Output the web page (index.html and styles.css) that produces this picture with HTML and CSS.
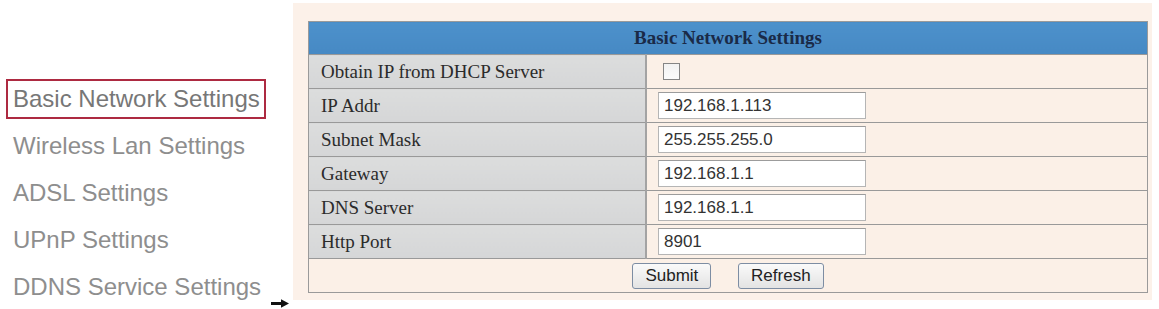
FILE: index.html
```html
<!DOCTYPE html>
<html lang="en">
<head>
  <meta charset="UTF-8">
  <title>Basic Network Settings</title>
  <link rel="stylesheet" href="styles.css">
</head>
<body>
  <div class="page">
    <ul class="sidebar">
      <li class="nav-item active">Basic Network Settings</li>
      <li class="nav-item">Wireless Lan Settings</li>
      <li class="nav-item">ADSL Settings</li>
      <li class="nav-item">UPnP Settings</li>
      <li class="nav-item">DDNS Service Settings<svg class="arrow" width="18" height="9" viewBox="0 0 18 9"><path d="M0 3H10V0.3L18 4.5L10 8.7V6H0Z" fill="#111"/></svg></li>
    </ul>

    <div class="panel">
      <form>
        <table class="settings">
          <tr>
            <th colspan="2" class="title">Basic Network Settings</th>
          </tr>
          <tr>
            <td class="label">Obtain IP from DHCP Server</td>
            <td class="value"><input type="checkbox" class="check"></td>
          </tr>
          <tr>
            <td class="label">IP Addr</td>
            <td class="value"><input type="text" class="field" value="192.168.1.113"></td>
          </tr>
          <tr>
            <td class="label">Subnet Mask</td>
            <td class="value"><input type="text" class="field" value="255.255.255.0"></td>
          </tr>
          <tr>
            <td class="label">Gateway</td>
            <td class="value"><input type="text" class="field" value="192.168.1.1"></td>
          </tr>
          <tr>
            <td class="label">DNS Server</td>
            <td class="value"><input type="text" class="field" value="192.168.1.1"></td>
          </tr>
          <tr>
            <td class="label">Http Port</td>
            <td class="value"><input type="text" class="field" value="8901"></td>
          </tr>
          <tr>
            <td colspan="2" class="actions">
              <button type="button" class="btn">Submit</button>
              <button type="button" class="btn">Refresh</button>
            </td>
          </tr>
        </table>
      </form>
    </div>
  </div>
</body>
</html>
```

FILE: styles.css
```css
    body {
      margin: 0;
      background-color: #fff;
      font-family: "Liberation Sans", Arial, sans-serif;
    }
    .page {
      display: flex;
      padding-top: 3px;
      height: 309px;
      box-sizing: border-box;
    }
    .sidebar {
      flex: none;
      width: 293px;
      margin: 0;
      padding: 76px 0 0 0;
      list-style: none;
    }
    .nav-item {
      width: max-content;
      height: 36px;
      line-height: 36px;
      margin: 0 0 7px 6px;
      padding: 0 4px 0 5px;
      border: 2px solid transparent;
      font-size: 24px;
      color: #8e8e8e;
      white-space: nowrap;
    }
    .nav-item.active {
      border-color: #ad2a41;
      color: #777;
    }
    .arrow {
      margin-left: 10px;
      vertical-align: -13px;
    }
    .panel {
      flex: 1;
      height: 297px;
      box-sizing: border-box;
      margin-right: 7px;
      padding: 18px 4px 8px 15px;
      background-color: #fcf1e9;
    }
    .settings {
      width: 100%;
      border-collapse: collapse;
      border: 1px solid #9a9a9a;
      font-family: "Liberation Serif", "Times New Roman", serif;
      font-size: 19px;
      color: #2b2b2b;
    }
    .settings td {
      height: 33px;
      padding: 0;
      border-top: 1px solid #999;
    }
    .title {
      height: 32px;
      padding: 0;
      background: linear-gradient(#4d91cb, #4689c4);
      color: #1a2a47;
      font-size: 19px;
      font-weight: bold;
      text-align: center;
    }
    .label {
      width: 324px;
      padding-left: 12px !important;
      background: linear-gradient(#dcdddd, #d5d6d7);
      border-right: 2px solid #a3a3a3;
    }
    .value {
      padding-left: 11px !important;
      background-color: #fbf0e7;
    }
    .field {
      display: block;
      width: 208px;
      height: 27px;
      box-sizing: border-box;
      padding: 0 5px;
      border: 1px solid #b5b5b5;
      border-top-color: #9c9c9c;
      background-color: #fff;
      font-family: "Liberation Sans", Arial, sans-serif;
      font-size: 17px;
      color: #333;
    }
    .check {
      -webkit-appearance: none;
      appearance: none;
      display: block;
      width: 17px;
      height: 17px;
      margin: 0 0 0 5px;
      border: 1px solid #858585;
      background: linear-gradient(#f2f2f2, #fbfbfb);
    }
    .actions {
      text-align: center;
      background-color: #fbf0e7;
    }
    .btn {
      height: 26px;
      margin: 0 11px;
      padding: 0 12px;
      border: 1px solid #7d8da3;
      border-radius: 3px;
      background: linear-gradient(#fafafa, #e3e3e3);
      font-family: "Liberation Sans", Arial, sans-serif;
      font-size: 17px;
      color: #222;
      cursor: pointer;
    }
```
